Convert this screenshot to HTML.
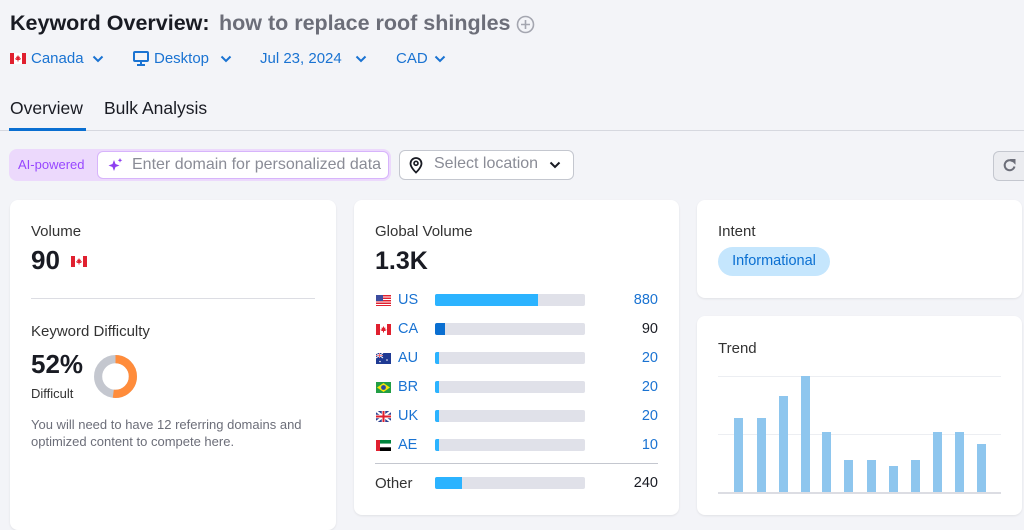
<!DOCTYPE html>
<html><head><meta charset="utf-8"><style>
*{margin:0;padding:0;box-sizing:border-box}
body{width:1024px;height:517px;background:#f3f4f8;font-family:"Liberation Sans",Arial,sans-serif;color:#191b23;position:relative;overflow:hidden}
.a{position:absolute;white-space:nowrap}
.card{position:absolute;background:#fff;border-radius:8px;box-shadow:0 1px 2px rgba(0,0,0,.08)}
.blue{color:#1a73d2}
.track{position:absolute;left:435px;width:150px;height:12px;background:#e0e1e9;border-radius:2px;overflow:hidden}
.fill{height:12px;background:#2bb3ff}
.cc{position:absolute;left:398px;font-size:14.5px;color:#1a73d2}
.num{position:absolute;right:366px;font-size:14.5px;color:#1a73d2;text-align:right}
.fl{position:absolute;left:376px;width:15px;height:11px}
.bar{position:absolute;width:9px;background:#8ec6ee;bottom:25px}
.lbl{font-size:15px;color:#333}
</style></head><body>
<div class="a" style="left:10px;top:11px;font-size:21.5px;font-weight:bold;color:#191b23">Keyword Overview:</div>
<div class="a" style="left:219px;top:11px;font-size:21.5px;font-weight:bold;color:#6c6e79">how to replace roof shingles</div>
<svg class="a" style="left:516px;top:15px" width="19" height="19" viewBox="0 0 19 19"><circle cx="9.5" cy="9.5" r="8" fill="none" stroke="#a4a6b0" stroke-width="1.6"/><path d="M9.5 5v9M5 9.5h9" stroke="#a4a6b0" stroke-width="1.6"/></svg>

<svg class="a" style="left:10px;top:53px" width="16" height="11"><rect width="16" height="11" fill="#fff"/><rect width="4" height="11" fill="#e0202f"/><rect x="12" width="4" height="11" fill="#e0202f"/><path d="M8 2l1 2 1-.5-.5 2.5 1-1 .5 1-1.5 1H8.5v1.5h-1V7H6.5L5 6l.5-1 1 1L6 3.5l1 .5z" fill="#e0202f"/></svg>
<div class="a blue" style="left:31px;top:50px;font-size:15px">Canada</div>
<svg class="a" style="left:92px;top:55px" width="12" height="8"><path d="M1.5 1.5l4.5 4.5 4.5-4.5" fill="none" stroke="#1a73d2" stroke-width="2"/></svg>
<svg class="a" style="left:133px;top:51px" width="16" height="15"><rect x="1" y="1" width="14" height="9" rx="1" fill="none" stroke="#1a73d2" stroke-width="2"/><path d="M8 10v3M4 14h8" stroke="#1a73d2" stroke-width="2"/></svg>
<div class="a blue" style="left:154px;top:50px;font-size:15px">Desktop</div>
<svg class="a" style="left:220px;top:55px" width="12" height="8"><path d="M1.5 1.5l4.5 4.5 4.5-4.5" fill="none" stroke="#1a73d2" stroke-width="2"/></svg>
<div class="a blue" style="left:260px;top:50px;font-size:15px">Jul 23, 2024</div>
<svg class="a" style="left:355px;top:55px" width="12" height="8"><path d="M1.5 1.5l4.5 4.5 4.5-4.5" fill="none" stroke="#1a73d2" stroke-width="2"/></svg>
<div class="a blue" style="left:396px;top:50px;font-size:15px">CAD</div>
<svg class="a" style="left:434px;top:55px" width="12" height="8"><path d="M1.5 1.5l4.5 4.5 4.5-4.5" fill="none" stroke="#1a73d2" stroke-width="2"/></svg>

<div class="a" style="left:10px;top:98px;font-size:17.5px;color:#191b23">Overview</div>
<div class="a" style="left:104px;top:98px;font-size:17.5px;color:#191b23">Bulk Analysis</div>
<div class="a" style="left:0;top:130px;width:1024px;height:1px;background:#d6d8df"></div>
<div class="a" style="left:9px;top:128px;width:77px;height:3px;background:#0a6fd1"></div>

<div class="a" style="left:9px;top:149px;width:382px;height:32px;background:#ecd9fc;border-radius:8px"></div>
<div class="a" style="left:18px;top:157px;font-size:13px;color:#9747ff">AI-powered</div>
<div class="a" style="left:97px;top:151px;width:292px;height:28px;background:#fff;border:1px solid #d7b4fb;border-radius:6px"></div>
<svg class="a" style="left:107px;top:157px" width="17" height="17" viewBox="0 0 17 17"><path d="M7 3l1.5 4 4 1.5-4 1.5L7 14l-1.5-4-4-1.5 4-1.5z" fill="#8e3ff0"/><path d="M13 1l.7 1.6 1.6.7-1.6.7L13 5.6l-.7-1.6-1.6-.7 1.6-.7z" fill="#8e3ff0"/></svg>
<div class="a" style="left:132px;top:156px;font-size:16px;color:#8a8c96">Enter domain for personalized data</div>
<div class="a" style="left:399px;top:150px;width:175px;height:30px;background:#fff;border:1px solid #c4c7cf;border-radius:6px"></div>
<svg class="a" style="left:408px;top:156px" width="16" height="18" viewBox="0 0 16 18"><path d="M8 16.5s-5.5-5-5.5-9a5.5 5.5 0 0111 0c0 4-5.5 9-5.5 9z" fill="none" stroke="#191b23" stroke-width="1.8"/><circle cx="8" cy="7.3" r="2" fill="none" stroke="#191b23" stroke-width="1.6"/></svg>
<div class="a" style="left:434px;top:155px;font-size:16px;color:#8a8c96">Select location</div>
<svg class="a" style="left:549px;top:161px" width="12" height="8"><path d="M1.5 1.5l4.5 4.5 4.5-4.5" fill="none" stroke="#191b23" stroke-width="2"/></svg>
<div class="a" style="left:993px;top:151px;width:40px;height:30px;background:#ebecf0;border:1px solid #c4c7cf;border-radius:6px"></div>
<svg class="a" style="left:1002px;top:157px" width="16" height="16" viewBox="0 0 16 16"><path d="M12.5 9.5A5 5 0 1 1 11 4.5" fill="none" stroke="#6c6e79" stroke-width="2"/><path d="M9 2.5h4v4z" fill="#6c6e79" stroke="#6c6e79" stroke-width="1"/></svg>

<!-- left card -->
<div class="card" style="left:10px;top:200px;width:326px;height:330px"></div>
<div class="a lbl" style="left:31px;top:223px">Volume</div>
<div class="a" style="left:31px;top:245px;font-size:26px;font-weight:bold">90</div>
<svg class="a" style="left:71px;top:256px" width="16" height="11"><rect width="16" height="11" fill="#fff"/><rect width="4" height="11" fill="#e0202f"/><rect x="12" width="4" height="11" fill="#e0202f"/><path d="M8 2l1 2 1-.5-.5 2.5 1-1 .5 1-1.5 1H8.5v1.5h-1V7H6.5L5 6l.5-1 1 1L6 3.5l1 .5z" fill="#e0202f"/></svg>
<div class="a" style="left:31px;top:298px;width:284px;height:1px;background:#dcdde3"></div>
<div class="a lbl" style="left:31px;top:323px">Keyword Difficulty</div>
<div class="a" style="left:31px;top:349px;font-size:26px;font-weight:bold">52%</div>
<div class="a" style="left:31px;top:386px;font-size:13px;color:#333">Difficult</div>
<svg class="a" style="left:93px;top:354px" width="45" height="45" viewBox="0 0 44 44"><circle cx="22" cy="22" r="17" fill="none" stroke="#c4c7cf" stroke-width="8"/><circle cx="22" cy="22" r="17" fill="none" stroke="#ff8c3b" stroke-width="8" stroke-dasharray="55.5 200" transform="rotate(-90 22 22)"/></svg>
<div class="a" style="left:31px;top:416px;font-size:13px;color:#6c6e79;line-height:17px">You will need to have 12 referring domains and<br>optimized content to compete here.</div>

<!-- middle card -->
<div class="card" style="left:354px;top:200px;width:325px;height:315px"></div>
<div class="a lbl" style="left:375px;top:223px">Global Volume</div>
<div class="a" style="left:375px;top:247px;font-size:25px;font-weight:bold">1.3K</div>

<svg class="fl" style="top:295px" viewBox="0 0 15 11"><rect width="15" height="11" fill="#e0202f"/><path d="M0 2h15M0 4.5h15M0 7h15M0 9.5h15" stroke="#fff" stroke-width="1"/><rect width="7" height="6" fill="#3c4c9e"/></svg>
<div class="cc" style="top:292px">US</div><div class="track" style="top:294px"><div class="fill" style="width:103px"></div></div><div class="num" style="top:292px">880</div>

<svg class="fl" style="top:324px" viewBox="0 0 15 11"><rect width="15" height="11" fill="#fff"/><rect width="4" height="11" fill="#e0202f"/><rect x="11" width="4" height="11" fill="#e0202f"/><path d="M7.5 2l1 2 1-.5-.5 2.5 1-1 .5 1-1.5 1H8v1.5H7V7H6L4.5 6l.5-1 1 1-.5-2.5 1 .5z" fill="#e0202f"/></svg>
<div class="cc" style="top:321px">CA</div><div class="track" style="top:323px"><div class="fill" style="width:10px;background:#0a6fd1"></div></div><div class="num" style="top:321px;color:#191b23">90</div>

<svg class="fl" style="top:353px" viewBox="0 0 15 11"><rect width="15" height="11" fill="#1f3a93"/><path d="M0 0l7 5M7 0L0 5M3.5 0v5M0 2.5h7" stroke="#fff" stroke-width="1"/><path d="M3.5 0v5M0 2.5h7" stroke="#e0202f" stroke-width=".6"/><circle cx="11" cy="7" r=".8" fill="#fff"/><circle cx="4" cy="8.5" r=".8" fill="#fff"/></svg>
<div class="cc" style="top:350px">AU</div><div class="track" style="top:352px"><div class="fill" style="width:4px"></div></div><div class="num" style="top:350px">20</div>

<svg class="fl" style="top:382px" viewBox="0 0 15 11"><rect width="15" height="11" fill="#229e45"/><path d="M7.5 1L14 5.5 7.5 10 1 5.5z" fill="#f8e509"/><circle cx="7.5" cy="5.5" r="2.4" fill="#2b49a3"/></svg>
<div class="cc" style="top:379px">BR</div><div class="track" style="top:381px"><div class="fill" style="width:4px"></div></div><div class="num" style="top:379px">20</div>

<svg class="fl" style="top:411px" viewBox="0 0 15 11"><rect width="15" height="11" fill="#2b3f8f"/><path d="M0 0l15 11M15 0L0 11" stroke="#fff" stroke-width="2"/><path d="M7.5 0v11M0 5.5h15" stroke="#fff" stroke-width="3.5"/><path d="M7.5 0v11M0 5.5h15" stroke="#e0202f" stroke-width="2"/></svg>
<div class="cc" style="top:408px">UK</div><div class="track" style="top:410px"><div class="fill" style="width:4px"></div></div><div class="num" style="top:408px">20</div>

<svg class="fl" style="top:440px" viewBox="0 0 15 11"><rect width="15" height="3.7" fill="#00843d"/><rect y="3.7" width="15" height="3.6" fill="#fff"/><rect y="7.3" width="15" height="3.7" fill="#000"/><rect width="4" height="11" fill="#e0202f"/></svg>
<div class="cc" style="top:437px">AE</div><div class="track" style="top:439px"><div class="fill" style="width:4px"></div></div><div class="num" style="top:437px">10</div>

<div class="a" style="left:375px;top:463px;width:283px;height:1px;background:#c4c7cf"></div>
<div class="a" style="left:375px;top:475px;font-size:15px;color:#333">Other</div><div class="track" style="top:477px"><div class="fill" style="width:27px"></div></div><div class="num" style="top:475px;color:#191b23">240</div>

<!-- right cards -->
<div class="card" style="left:697px;top:200px;width:325px;height:98px"></div>
<div class="a lbl" style="left:718px;top:223px">Intent</div>
<div class="a" style="left:718px;top:247px;width:112px;height:29px;background:#c5e6fd;border-radius:15px;font-size:14.5px;color:#0a6fd1;text-align:center;line-height:29px">Informational</div>

<div class="card" style="left:697px;top:316px;width:325px;height:199px"></div>
<div class="a lbl" style="left:718px;top:340px">Trend</div>
<div class="a" style="left:718px;top:376px;width:283px;height:1px;background:#eceef2"></div>
<div class="a" style="left:718px;top:434px;width:283px;height:1px;background:#eceef2"></div>
<div class="a" style="left:718px;top:492px;width:283px;height:2px;background:#dcdde3"></div>
<div class="bar" style="left:734px;top:418px;height:74px"></div>
<div class="bar" style="left:757px;top:418px;height:74px"></div>
<div class="bar" style="left:779px;top:396px;height:96px"></div>
<div class="bar" style="left:801px;top:376px;height:116px"></div>
<div class="bar" style="left:822px;top:432px;height:60px"></div>
<div class="bar" style="left:844px;top:460px;height:32px"></div>
<div class="bar" style="left:867px;top:460px;height:32px"></div>
<div class="bar" style="left:889px;top:466px;height:26px"></div>
<div class="bar" style="left:911px;top:460px;height:32px"></div>
<div class="bar" style="left:933px;top:432px;height:60px"></div>
<div class="bar" style="left:955px;top:432px;height:60px"></div>
<div class="bar" style="left:977px;top:444px;height:48px"></div>
</body></html>
